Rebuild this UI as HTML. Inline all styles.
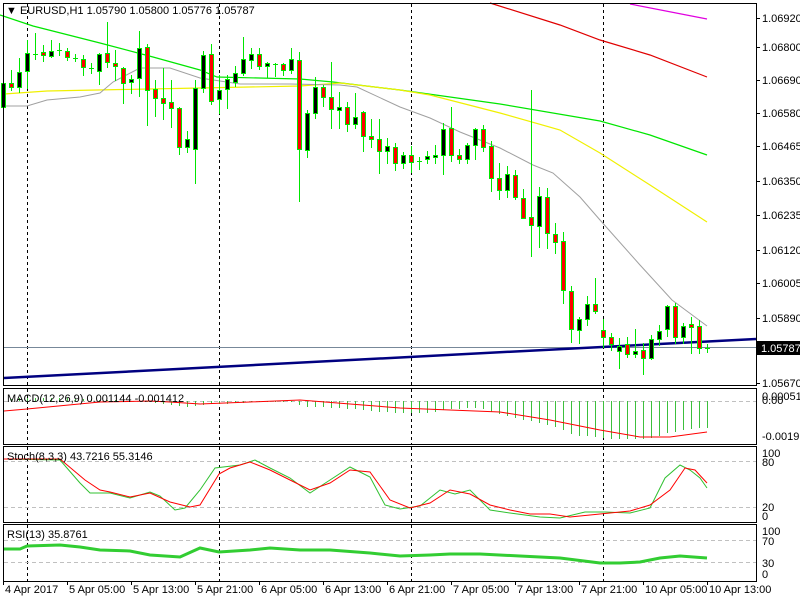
<!DOCTYPE html>
<html><head><meta charset="utf-8"><style>
html,body{margin:0;padding:0;background:#fff;width:800px;height:600px;overflow:hidden}
svg{display:block}
text{font-family:"Liberation Sans",sans-serif;font-size:11px;fill:#000}
</style></head><body>
<svg id="s" width="800" height="600" viewBox="0 0 800 600" shape-rendering="crispEdges">
<rect width="800" height="600" fill="#fff"/>
<g id="grid"></g>
<g id="ma" fill="none" shape-rendering="auto"></g>
<g id="c"></g>
<g id="ind" fill="none" shape-rendering="auto"></g>
<!-- frames -->
<g fill="none" stroke="#000" stroke-width="1">
<rect x="3.5" y="3.5" width="753" height="382"/>
<rect x="3.5" y="388.5" width="753" height="56"/>
<rect x="3.5" y="446.5" width="753" height="76"/>
<rect x="3.5" y="524.5" width="753" height="57"/>
</g>
<text x="6" y="14" style="font-size:11px">▼ EURUSD,H1  1.05790 1.05800 1.05776 1.05787</text>
<text x="7" y="402">MACD(12,26,9) 0.001144 -0.001412</text>
<text x="7" y="460">Stoch(8,3,3) 43.7216 55.3146</text>
<text x="7" y="538">RSI(13) 35.8761</text>
<g id="axis"></g>
<rect x="757" y="341" width="43" height="14" fill="#000"/>
<text x="761" y="352" style="fill:#fff">1.05787</text>
</svg>
<script>
var NS="http://www.w3.org/2000/svg";
function el(p,t,a){var e=document.createElementNS(NS,t);for(var k in a)e.setAttribute(k,a[k]);p.appendChild(e);return e;}
var g=document.getElementById('grid'),ma=document.getElementById('ma'),cg=document.getElementById('c'),ind=document.getElementById('ind'),ax=document.getElementById('axis');
// vertical dashed separators
[27,219,411,603].forEach(function(x){
 [[4,385],[389,444],[447,522],[525,581]].forEach(function(r){el(g,'line',{x1:x+.5,y1:r[0],x2:x+.5,y2:r[1],stroke:'#000','stroke-dasharray':'3,3'});});
});
// level lines
function hd(y,x1,x2){el(g,'line',{x1:x1||4,y1:y+.5,x2:x2||756,y2:y+.5,stroke:'#c0c0c0','stroke-dasharray':'4,3'});}
hd(401);hd(461);hd(507);hd(540);hd(562);
// current price line
el(g,'line',{x1:4,y1:347.5,x2:756,y2:347.5,stroke:'#778899'});
function pl(pts,col,w,par){el(par||ma,'polyline',{points:pts.map(function(p){return p.join(',')}).join(' '),stroke:col,'stroke-width':w||1});}
pl([[4,378],[756,339]],'#000080',2.5);
pl([[0,15],[33,26],[100,43],[153,57],[200,70],[217,77],[300,79],[333,82],[400,90],[500,104],[600,121],[650,135],[707,155]],'#00e600',1.2);
pl([[4,94],[47,91],[200,88],[300,86],[340,83],[400,90],[430,95],[500,113],[560,130],[600,153],[650,185],[707,222]],'#f0f000',1.2);
pl([[3,106],[27,106],[47,100],[80,97],[100,93],[113,82],[140,68],[170,68],[200,78],[240,84],[290,84],[340,85],[357,87],[400,107],[430,118],[460,132],[500,148],[533,165],[553,173],[580,197],[600,220],[640,265],[672,300],[707,326]],'#a0a0a0',1);
pl([[490,3],[560,25],[600,40],[650,55],[707,77]],'#e00000',1.2);
pl([[630,4],[707,19]],'#e000e0',1.2);
// candles: [bodyTop,bodyBot,wickTop,wickBot,type]
var D=[[83,107,82,117,'b'],[83,87,70,90,'r'],[72,87,58,92,'b'],[53,71,40,88,'b'],[54,54,33,59,'d'],[52,55,45,61,'r'],[51,56,40,57,'b'],[50,50,43,55,'d'],[51,57,48,60,'r'],[58,58,54,61,'d'],
[59,67,55,75,'r'],[68,68,63,73,'d'],[54,71,53,84,'b'],[53,62,22,67,'r'],[63,66,50,80,'r'],[68,83,67,103,'r'],[79,82,75,93,'b'],[48,78,31,96,'b'],[47,90,44,125,'r'],[89,98,80,116,'r'],
[98,103,68,119,'r'],[102,108,80,127,'r'],[108,147,107,154,'r'],[139,147,131,152,'b'],[88,149,80,183,'b'],[55,88,51,92,'b'],[54,101,44,104,'r'],[90,99,75,113,'b'],[79,89,75,108,'b'],[73,82,66,86,'b'],
[59,73,37,75,'b'],[54,60,48,68,'b'],[54,66,48,69,'r'],[63,66,62,77,'b'],[64,64,63,76,'d'],[64,70,63,75,'r'],[59,70,48,73,'b'],[60,149,52,201,'r'],[113,150,110,157,'b'],[87,113,77,118,'b'],
[87,97,85,106,'r'],[97,109,62,128,'r'],[107,110,92,128,'b'],[107,124,102,131,'r'],[117,124,93,128,'b'],[112,136,111,151,'r'],[136,139,119,147,'r'],[139,151,119,173,'r'],[146,151,138,163,'b'],[147,163,143,170,'r'],
[155,163,152,168,'b'],[155,162,146,172,'r'],[161,161,157,169,'d'],[156,159,151,163,'b'],[155,157,145,163,'b'],[129,155,123,174,'b'],[128,155,107,161,'r'],[155,159,149,163,'r'],[145,159,143,163,'b'],[129,145,128,159,'b'],
[129,147,125,151,'r'],[146,178,141,191,'r'],[178,190,163,199,'r'],[174,190,166,197,'b'],[175,197,170,199,'r'],[198,218,189,218,'r'],[217,225,90,256,'r'],[196,226,187,247,'b'],[197,233,188,248,'r'],[234,242,223,253,'r'],
[241,290,232,303,'r'],[291,329,286,342,'r'],[319,330,317,343,'b'],[304,319,296,325,'b'],[304,311,278,313,'r'],[330,337,319,347,'r'],[337,344,333,350,'r'],[346,351,338,368,'b'],[344,354,337,357,'r'],[351,354,329,357,'b'],
[350,358,343,374,'r'],[339,358,335,359,'b'],[331,339,325,345,'b'],[306,329,305,336,'b'],[306,337,303,343,'r'],[326,337,323,343,'b'],[324,327,317,353,'r'],[326,348,320,353,'r'],[348,348,344,352,'d']];
D.forEach(function(d,i){
 var c=3+8*i;
 el(cg,'line',{x1:c+.5,y1:d[2],x2:c+.5,y2:d[3]+1,stroke:'#00e600'});
 if(d[4]=='d'){el(cg,'line',{x1:c-2,y1:d[0]+.5,x2:c+3,y2:d[0]+.5,stroke:'#00e600'});}
 else{var h=Math.max(d[1]-d[0],2);el(cg,'rect',{x:c-1.5,y:d[0]+.5,width:4,height:h,fill:d[4]=='b'?'#000':'#f00',stroke:'#00e600'});}
});
// MACD histogram
var M=[399,399,398,398,398,398,398,398,398,399,399,399,400,400,400,401,401,401,402,403,404,405,406,407,406,405,404,404,404,403,403,402,402,402,402,402,402,405,407,407,407,408,408,409,409,410,411,412,412,413,413,413,413,413,412,410,409,409,408,408,409,412,414,416,418,420,421,423,425,427,430,434,436,436,437,438,439,439,439,439,439,438,436,433,432,430,429,428,428];
M.forEach(function(v,i){var c=3+8*i;el(g,'line',{x1:c+.5,y1:401,x2:c+.5,y2:v,stroke:'#3cbf3c'});});
pl([[4,411],[27,409],[100,402],[150,401],[170,402],[200,404],[250,402],[300,400],[350,404],[400,408],[450,410],[500,412],[550,420],[600,430],[640,437],[670,437],[707,432]],'#f00',1,ind);
pl([[4,459],[60,460],[80,483],[90,493],[110,493],[130,498],[150,492],[160,496],[175,510],[185,508],[200,490],[215,468],[240,465],[255,460],[270,468],[290,478],[310,493],[330,480],[350,467],[370,477],[385,505],[400,509],[420,506],[440,490],[455,494],[470,490],[490,510],[510,513],[540,517],[560,518],[585,512],[605,512],[630,513],[650,508],[665,478],[680,465],[690,470],[700,478],[707,488]],'#30c030',1,ind);
pl([[4,459],[27,459],[60,459],[85,480],[100,490],[110,492],[130,497],[150,493],[170,502],[190,507],[200,505],[219,474],[230,468],[250,462],[270,470],[290,480],[310,490],[330,483],[350,470],[370,472],[390,500],[410,508],[430,503],[450,490],[470,494],[490,505],[510,510],[530,514],[550,514],[570,517],[590,515],[610,513],[630,511],[650,505],[670,490],[685,468],[695,470],[707,483]],'#f00',1,ind);
pl([[4,549],[20,549],[27,546],[60,545],[80,547],[100,550],[130,551],[150,555],[180,557],[200,548],[219,552],[250,550],[270,548],[300,550],[330,550],[370,553],[400,556],[430,555],[450,554],[480,554],[520,556],[560,558],[600,563],[620,563],[640,562],[660,558],[680,556],[707,558]],'#32cd32',3,ind);
// axis
function tx(x,y,s){var t=el(ax,'text',{x:x,y:y});t.textContent=s;}
[['1.06920',18],['1.06800',47],['1.06690',80],['1.06580',113],['1.06465',146],['1.06350',181],['1.06235',215],['1.06120',250],['1.06005',283],['1.05890',318],['1.05670',383]].forEach(function(a){
 el(ax,'line',{x1:756,y1:a[1]+.5,x2:760,y2:a[1]+.5,stroke:'#000'});tx(762,a[1]+4,a[0]);});
tx(762,400,'0.000518');tx(762,404,'0.00');tx(762,440,'-0.0019');
[['100',453],['80',462],['20',507],['0',516]].forEach(function(a){tx(762,a[1]+4,a[0]);});
[['100',531],['70',541],['30',563],['0',574]].forEach(function(a){tx(762,a[1]+4,a[0]);});
['4 Apr 2017','5 Apr 05:00','5 Apr 13:00','5 Apr 21:00','6 Apr 05:00','6 Apr 13:00','6 Apr 21:00','7 Apr 05:00','7 Apr 13:00','7 Apr 21:00','10 Apr 05:00','10 Apr 13:00'].forEach(function(s,k){
 var x=3+64*k;el(ax,'line',{x1:x+.5,y1:581,x2:x+.5,y2:585,stroke:'#000'});tx(x+2,593,s);});
</script>
</body></html>
